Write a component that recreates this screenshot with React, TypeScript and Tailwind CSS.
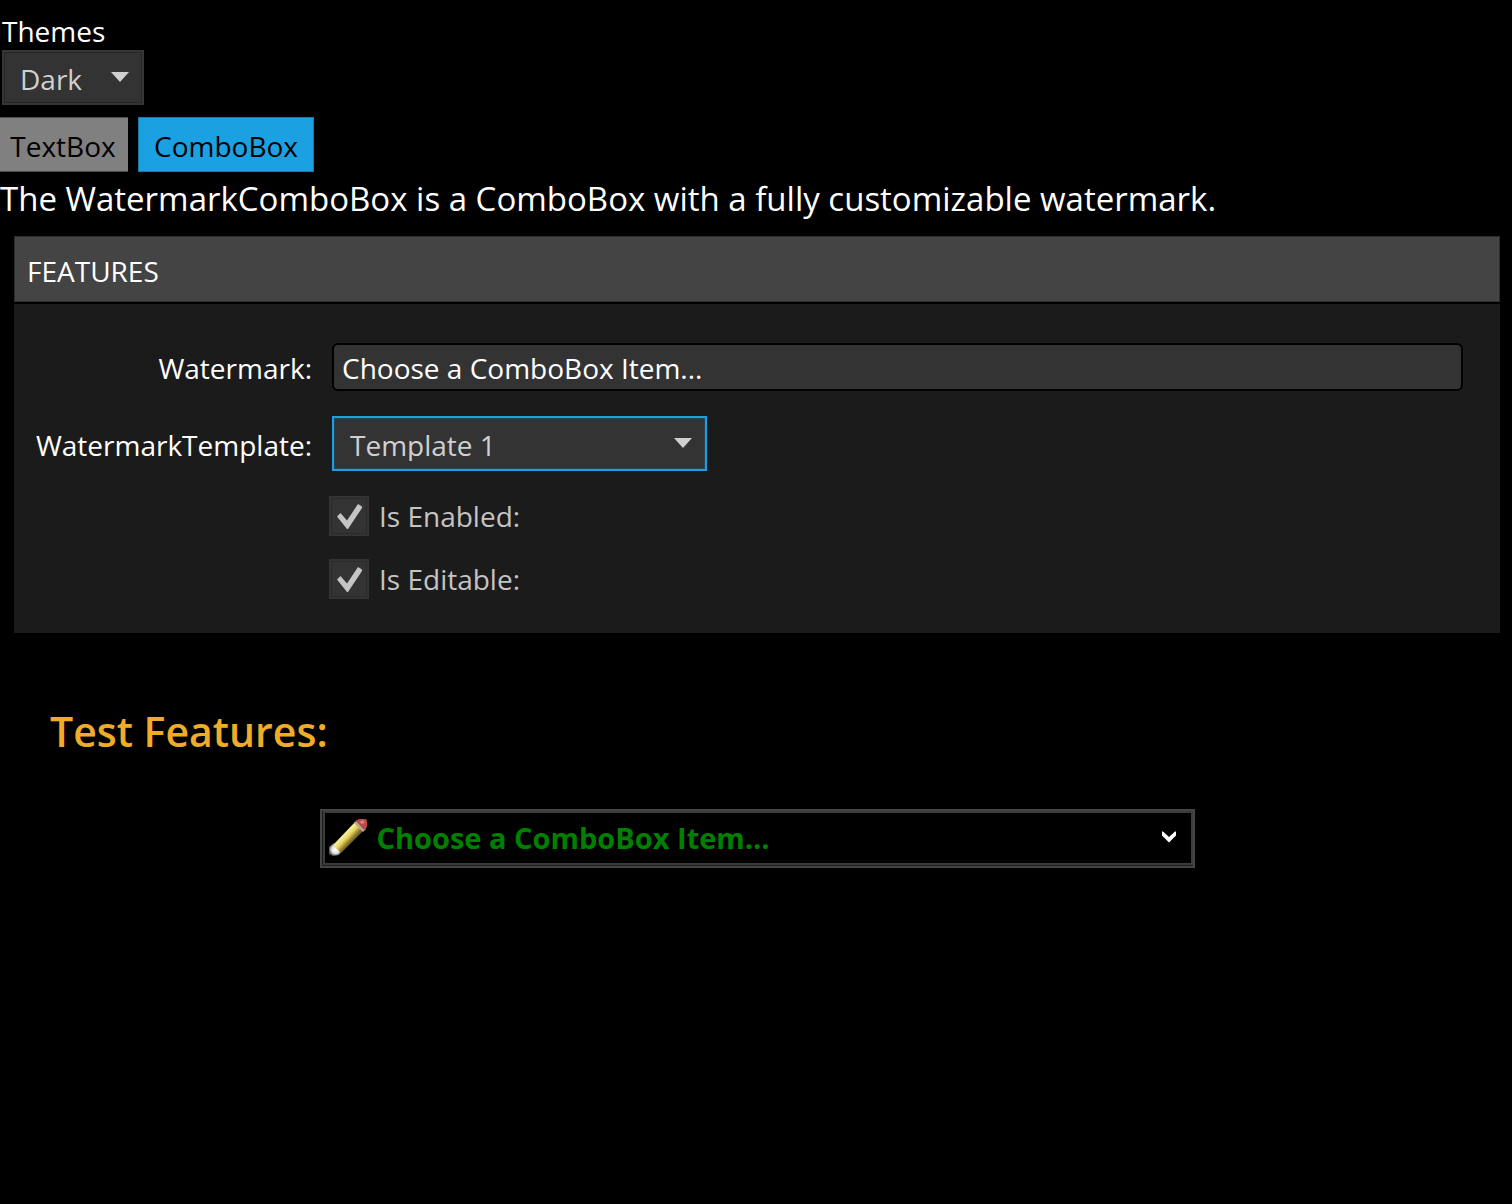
import React, { useState } from "react";

type DropDownProps = {
  id: string;
  options: string[];
  className: string;
  focused?: boolean;
};

function DropDown({ id, options, className, focused }: DropDownProps) {
  return (
    <div className={`relative ${className}`}>
      <select
        id={id}
        className={`h-[55px] w-full appearance-none border-2 bg-[#333333] pt-[2px] pr-10 pl-4 text-[28px] leading-8 text-[#d0d0d0] outline-none ${
          focused
            ? "border-[#1ba1e2] inset-ring inset-ring-[#2a4350]"
            : "border-[#363636] inset-ring inset-ring-[#262626]"
        }`}
      >
        {options.map((option) => (
          <option key={option}>{option}</option>
        ))}
      </select>
      <svg
        className="pointer-events-none absolute top-[22px] right-[15px] h-[10px] w-[18px]"
        viewBox="0 0 18 10"
        aria-hidden="true"
      >
        <path d="M0 0H18L9 10Z" fill="#d0d0d0" />
      </svg>
    </div>
  );
}

function CheckBox({ label }: { label: string }) {
  const [checked, setChecked] = useState(true);
  return (
    <label className="flex h-10 w-fit items-center gap-[10px] text-[28px] leading-10 text-[#c4c4c4]">
      <span className="relative block size-10">
        <input
          type="checkbox"
          checked={checked}
          onChange={(e) => setChecked(e.target.checked)}
          className="block size-10 appearance-none border-2 border-[#333333] bg-[#333333] inset-ring inset-ring-[#2a2a2a]"
        />
        {checked && (
          <svg
            className="pointer-events-none absolute inset-0 size-10"
            viewBox="0 0 40 40"
            aria-hidden="true"
          >
            <path d="M8 20.5L11.5 17L18 24.5L29 8L33 10.5V12L19 33H18Z" fill="#c4c4c4" />
          </svg>
        )}
      </span>
      {label}
    </label>
  );
}

function PencilIcon() {
  return (
    <svg className="h-10 w-10 shrink-0" viewBox="0 0 40 40" aria-hidden="true">
      <defs>
        <linearGradient id="wood" x1="11.5" y1="15" x2="21" y2="24" gradientUnits="userSpaceOnUse">
          <stop offset="0" stopColor="#a89440" />
          <stop offset="0.3" stopColor="#f7ee9c" />
          <stop offset="0.6" stopColor="#e8d45e" />
          <stop offset="1" stopColor="#7d6822" />
        </linearGradient>
        <radialGradient id="tip">
          <stop offset="0" stopColor="#ffffff" />
          <stop offset="0.6" stopColor="#e4e4e4" />
          <stop offset="1" stopColor="#555555" />
        </radialGradient>
        <filter id="soften">
          <feGaussianBlur stdDeviation="0.7" />
        </filter>
      </defs>
      <g filter="url(#soften)">
        <path d="M0 29L5 25L13 33L10 37L4 38L0 36Z" fill="url(#tip)" />
        <path d="M4 27L26 4L35 12L12 35Z" fill="url(#wood)" />
        <path d="M25 5L28 2L37 11L34 14Z" fill="#b9a7a0" />
        <path d="M27 3L30 1H37L38 3V9L35 12Z" fill="#b94a45" />
        <path d="M30 4L34 2L36 5L33 6Z" fill="#d9817a" />
      </g>
    </svg>
  );
}

export default function App() {
  const [watermark, setWatermark] = useState("Choose a ComboBox Item...");
  return (
    <main className="min-h-screen bg-black pt-[14px] font-['Open_Sans','Noto_Sans',sans-serif] text-[28px] text-white">
      <div className="pl-[2px]">
        <label htmlFor="theme" className="block h-9 leading-[34px]">
          Themes
        </label>
        <DropDown id="theme" options={["Dark", "Light"]} className="w-[142px]" />
      </div>

      <nav className="mt-3 flex gap-[10px] text-black">
        <button type="button" className="h-[55px] w-32 border-y border-[#4c4c4c] bg-[#808080] pt-[2px] pr-[2px] text-center">
          TextBox
        </button>
        <button type="button" className="h-[55px] w-44 border border-[#167cae] bg-[#1ba1e2] pt-[2px] text-center">
          ComboBox
        </button>
      </nav>

      <p className="h-[64px] text-[33px] leading-[54px]">
        The WatermarkComboBox is a ComboBox with a fully customizable watermark.
      </p>

      <section className="mr-[12px] ml-[14px]">
        <h2 className="mb-[2px] h-[66px] border border-[#2e2e2e] bg-[#444444] px-3 leading-[68px]">
          FEATURES
        </h2>
        <div className="grid grid-cols-[298px_1fr] items-center gap-x-5 bg-[#1b1b1b] pt-[39px] pr-[37px] pb-[34px]">
          <label htmlFor="watermark" className="pt-[2px] text-right whitespace-nowrap">
            Watermark:
          </label>
          <input
            id="watermark"
            type="text"
            value={watermark}
            onChange={(e) => setWatermark(e.target.value)}
            className="h-12 w-full rounded-md border-2 border-black bg-[#333333] px-2 pt-px leading-10 outline-none"
          />
          <label htmlFor="template" className="mt-[25px] pt-[2px] text-right whitespace-nowrap">
            WatermarkTemplate:
          </label>
          <DropDown
            id="template"
            options={["Template 1", "Template 2"]}
            className="mt-[25px] w-[375px]"
            focused
          />
          <div className="col-start-2 mt-[25px] -ml-[3px] flex flex-col gap-[23px]">
            <CheckBox label="Is Enabled:" />
            <CheckBox label="Is Editable:" />
          </div>
        </div>
      </section>

      <section className="px-[50px] pt-[72px]">
        <h2 className="text-[41px] leading-[52px] font-semibold text-[#f0ab28]">Test Features:</h2>
      </section>
      <div className="mt-[52px] pl-[2px]">
        <div className="mx-auto h-[59px] w-[875px] max-w-full border-2 border-[#444444] bg-[#1c1c1c] pb-px pl-px">
          <div className="flex h-full items-center border-2 border-[#3c3c3c] bg-black pr-[15px] pb-px pl-1">
            <PencilIcon />
            <input
              type="text"
              aria-label="Watermark combo box"
              placeholder="Choose a ComboBox Item..."
              className="ml-2 h-12 min-w-0 flex-1 text-[29px] font-bold outline-none placeholder:text-[#008000] placeholder:opacity-100"
            />
            <button type="button" aria-label="Open list" className="pb-[2px]">
              <svg className="h-3 w-[14px]" viewBox="0 0 14 12" aria-hidden="true">
                <path d="M0 0.5H1L7 6L13 0.5H14V4.5L7 11.5L0 4.5Z" fill="#ffffff" />
              </svg>
            </button>
          </div>
        </div>
      </div>
    </main>
  );
}
